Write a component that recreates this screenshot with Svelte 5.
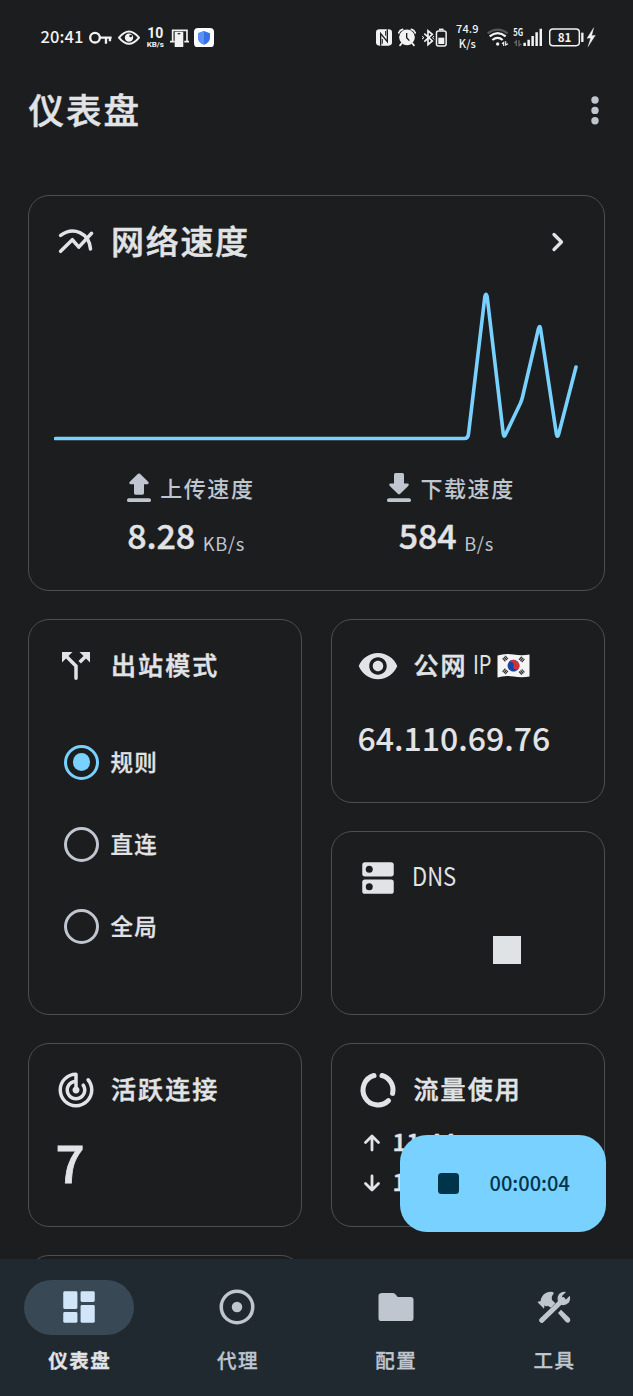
<script>
  const paths = {
    split: 'M14 4l2.29 2.29-2.88 2.88 1.42 1.42 2.88-2.88L20 10V4zM10 4H4v6l2.29-2.29 4.71 4.7V19q0 1 1 1t1-1v-7.41l-5.29-5.3z',
    eye: 'M12 4.5C7 4.5 2.73 7.61 1 12c1.73 4.39 6 7.5 11 7.5s9.27-3.11 11-7.5C21.27 7.61 17 4.5 12 4.5zM12 17c-2.76 0-5-2.24-5-5s2.24-5 5-5 5 2.24 5 5-2.24 5-5 5zm0-8c-1.66 0-3 1.34-3 3s1.34 3 3 3 3-1.34 3-3-1.34-3-3-3z',
    radar: 'M19.8 5.6a1 1 0 0 0-1.7 1.2A8 8 0 0 1 20 12c0 4.42-3.58 8-8 8s-8-3.58-8-8c0-4.08 3.05-7.44 7-7.93v2.02C8.16 6.57 6 9.03 6 12c0 3.31 2.69 6 6 6s6-2.69 6-6c0-1.3-.4-2.4-1-3.3a1 1 0 0 0-1.7 1.2c.45.7.7 1.3.7 2.1 0 2.21-1.79 4-4 4s-4-1.79-4-4c0-1.86 1.28-3.41 3-3.86v2.14c-.6.35-1 .98-1 1.72 0 1.1.9 2 2 2s2-.9 2-2c0-.74-.4-1.38-1-1.72V3q0-1-1-1C6.48 2 2 6.48 2 12s4.48 10 10 10 10-4.48 10-10c0-2.4-.8-4.6-2.2-6.4z'
  };
  const modes = ['规则', '直连', '全局'];
  let mode = $state('规则');
  const tabs = [
    { id: 'dash', label: '仪表盘' },
    { id: 'proxy', label: '代理' },
    { id: 'profile', label: '配置' },
    { id: 'tools', label: '工具' }
  ];
  let tab = $state('dash');
</script>

{#snippet icon(name)}
  <svg class="icon" viewBox="0 0 24 24"><path d={paths[name]} fill="currentColor" fill-rule="evenodd" /></svg>
{/snippet}

<div class="screen">
  <div class="status">
    <span class="time">20:41</span>
    <svg class="key" viewBox="268 80 70 62" width="23.3" height="20.7" fill="none" stroke="#f2f2f2" stroke-width="7">
      <circle cx="286" cy="112" r="14.5" /><path d="M301 112h35M319 112v18M331 112v11" />
    </svg>
    <svg class="look" viewBox="355 80 66 62" width="22" height="20.7">
      <path d="M358 112Q388 75 418 112Q388 149 358 112z" fill="none" stroke="#f2f2f2" stroke-width="6" />
      <circle cx="388" cy="112" r="12.5" fill="#f2f2f2" /><circle cx="393" cy="107" r="4" fill="#1c1d1e" />
    </svg>
    <span class="rate"><b>10</b><small>KB/s</small></span>
    <svg class="car" viewBox="510 80 58 62" width="19.3" height="20.7">
      <path d="M518 123V90h43v33M510 124h14M553 124h15" fill="none" stroke="#f2f2f2" stroke-width="5" />
      <rect x="524" y="94" width="26" height="47" rx="3" fill="#f2f2f2" /><path d="M533 100h8" stroke="#333" stroke-width="4" />
    </svg>
    <svg class="shield" viewBox="582 80 60 62" width="20" height="20.7">
      <rect x="582" y="83" width="60" height="58" rx="12" fill="#fff" />
      <path d="M612 92l18 7v14q0 13-18 20q-18-7-18-20V99z" fill="#3572e8" /><path d="M612 92v41q-18-7-18-20V99z" fill="#5b92f3" />
    </svg>
    <span class="fill"></span>
    <svg class="nfc" viewBox="168 80 48 62" width="16" height="20.7">
      <rect x="168" y="87" width="48" height="49" rx="10" fill="#f2f2f2" />
      <path d="M182 136V100l20 24V87" fill="none" stroke="#1c1d1e" stroke-width="4" /><path d="M187 116v14M197 92v14" stroke="#1c1d1e" stroke-width="3" />
    </svg>
    <svg class="alarm" viewBox="236 80 54 62" width="18" height="20.7">
      <circle cx="263" cy="111" r="23.5" fill="#f2f2f2" />
      <path d="M238 98q3-9 12-11M288 98q-3-9-12-11M247 129l-5 6M279 129l5 6" fill="none" stroke="#f2f2f2" stroke-width="5" stroke-linecap="round" />
      <path d="M262 98v14l8 9" fill="none" stroke="#1c1d1e" stroke-width="4" />
    </svg>
    <svg class="bt" viewBox="307 80 76 62" width="25.3" height="20.7" fill="none" stroke="#f2f2f2">
      <path d="M314 100l24 22-13 11V91l13 11-24 22" stroke-width="5" /><path d="M307 108l6 4-6 4M343 107l-4 5 4 5" stroke-width="3" />
      <rect x="350.5" y="92" width="29" height="45" rx="6" stroke-width="4.500" /><path d="M358 87h14" stroke-width="4.5" />
      <rect x="356" y="112" width="18" height="19" fill="#f2f2f2" stroke="none" />
    </svg>
    <span class="speed"><span>74.9</span><span>K/s</span></span>
    <svg class="wifi" viewBox="500 80 65 62" width="21.7" height="20.7" fill="none" stroke="#f2f2f2" stroke-width="6.500">
      <path d="M502 99q30-22 60 0" stroke="#55585a" /><path d="M508 108q24-20 48 0M516 119q16-13 31 0" />
      <circle cx="532" cy="131" r="5" fill="#f2f2f2" stroke="none" /><path d="M545 130l5-4v11M556 123v11l7-4" stroke-width="3.5" />
    </svg>
    <svg class="signal" viewBox="575 74 91 74" width="30.3" height="24.7">
      <text x="579" y="107" textLength="30" lengthAdjust="spacingAndGlyphs" class="five">5G</text>
      <path d="M582 128l6-6v15M596 120v16l7-6" fill="none" stroke="#66696b" stroke-width="4" />
      <path d="M613 127v10M625 118v19M637 107v30M649 96v41M661.500 85v52" stroke="#f2f2f2" stroke-width="7.500" />
    </svg>
    <svg class="battery" viewBox="685 80 140 62" width="46.7" height="20.7">
      <rect x="687" y="86" width="89" height="50" rx="10" fill="none" stroke="#f2f2f2" stroke-width="4.500" />
      <text x="711" y="124" textLength="41" lengthAdjust="spacingAndGlyphs" class="pct">81</text>
      <path d="M785 97v28" stroke="#f2f2f2" stroke-width="7" /><path d="M819 82l-20 32 11-1-8 26 22-34-11 1z" fill="#f2f2f2" stroke="#f2f2f2" />
    </svg>
  </div>

  <header class="appbar">
    <h1>仪表盘</h1>
    <svg viewBox="0 0 8 30" width="8" height="30" fill="#bfc6cf"><circle cx="4" cy="5" r="3.700" /><circle cx="4" cy="15.400" r="3.700" /><circle cx="4" cy="25.800" r="3.700" /></svg>
  </header>

  <main>
    <section class="card wide">
      <div class="head">
        <svg class="icon" viewBox="0 0 24 24" fill="none" stroke="currentColor" stroke-width="2" stroke-linecap="round" stroke-linejoin="round">
          <path d="M3.200 8.200C10.500 2.800 19.500 6.800 20.300 16" /><path d="M3.200 17.300L9.900 10.700L13.600 14.900L20.900 7" />
        </svg>
        <h2 class="big">网络速度</h2>
        <svg class="chev" viewBox="0 0 14 20" width="14" height="20" fill="none" stroke="#e1e3e6" stroke-width="3.300" stroke-linecap="round" stroke-linejoin="round"><path d="M3 2.500l7.500 7.500L3 17.500" /></svg>
      </div>
      <svg class="chart" viewBox="54.500 285 526 165" width="526" height="165" fill="none" stroke="#78d1ff" stroke-width="3.600" stroke-linecap="round" stroke-linejoin="round">
        <path d="M56 438.500H465Q468.500 438.500 469 434L485.300 297Q486.500 291.500 487.700 297L503.800 434Q504.500 438 506 434.500L521 403Q522.300 400 523 397L539 328.500Q540.200 324.500 541 328.500L556.900 434Q558 438.500 559.200 434L576.500 367" />
      </svg>
      <div class="stats">
        <div class="stat">
          <div class="cap">
            <svg viewBox="0 0 24 30" width="24" height="30" fill="currentColor"><path d="M11 .8q1-.8 2 0l8.200 8q1.400 2-.7 2.400H17V20q0 1.700-1.500 1.700h-7Q7 21.700 7 20v-8.800H3.500q-2.200-.4-.7-2.400z" /><rect y="25.300" width="24" height="3.800" rx="1.900" /></svg>
            <span>上传速度</span>
          </div>
          <div class="val"><b>8.28</b><small>KB/s</small></div>
        </div>
        <div class="stat">
          <div class="cap">
            <svg viewBox="0 0 24 30" width="24" height="30" fill="currentColor"><path d="M8.500 0h7Q17 0 17 1.700v8.800h3.500q2.200.4.700 2.400l-8.200 8q-1 .8-2 0l-8.200-8q-1.400-2 .7-2.400H7V1.700Q7 0 8.500 0z" /><rect y="25.300" width="24" height="3.800" rx="1.900" /></svg>
            <span>下载速度</span>
          </div>
          <div class="val"><b>584</b><small>B/s</small></div>
        </div>
      </div>
    </section>

    <div class="cols">
      <div class="col">
        <section class="card tall">
          <div class="head">{@render icon('split')}<h2>出站模式</h2></div>
          <div class="modes">
            {#each modes as m}
              <button class="mode" class:on={mode === m} onclick={() => (mode = m)}><i></i><span>{m}</span></button>
            {/each}
          </div>
        </section>
        <section class="card small">
          <div class="head">{@render icon('radar')}<h2>活跃连接</h2></div>
          <div class="count">7</div>
        </section>
        <section class="card small"></section>
      </div>
      <div class="col right">
        <section class="card small">
          <div class="head">
            {@render icon('eye')}
            <h2>公网</h2><span class="latin ip">IP</span>
            <svg class="flag" viewBox="0 0 33 26" width="33" height="26">
              <path d="M.5 2.500Q8 0 16.500 1.500T32.500 1.500V23.500Q25 25 16.500 23.500T.5 24.500z" fill="#f5f5f5" />
              <g transform="translate(16.500 12.700) rotate(20)">
                <circle r="5.900" fill="#1546a0" /><path d="M-5.900 0a5.900 5.900 0 0 1 11.800 0a2.950 2.950 0 0 1-5.900 0a2.950 2.950 0 0 0-5.900 0z" fill="#d0313f" />
              </g>
              <g stroke="#303030" stroke-width="4.200" stroke-dasharray="1.300 .5"><path d="M6.500 7.200l3.500-3M23 20.500l3.500-3M23 4.800l3.500 3.200M6.500 16.800l3.500 3" /></g>
            </svg>
          </div>
          <div class="addr">64.110.69.76</div>
        </section>
        <section class="card small">
          <div class="head">
            <svg class="icon" viewBox="0 0 24 24" fill="currentColor"><rect x="3" y="3" width="18" height="8.100" rx="1.500" /><rect x="3" y="12.900" width="18" height="8.100" rx="1.500" /><g fill="#1c1d1e"><circle cx="7" cy="7" r="2" /><circle cx="7" cy="17" r="2" /></g></svg>
            <span class="latin">DNS</span>
          </div>
          <div class="block"></div>
        </section>
        <section class="card small">
          <div class="head">
            <svg class="icon" viewBox="0 0 24 24" fill="none" stroke="currentColor" stroke-width="2.900" stroke-linecap="round"><path d="M14.300 3.750A8.560 8.560 0 0 1 20.350 13.900M18 18.100A8.560 8.560 0 1 1 9.700 3.750" /></svg>
            <h2>流量使用</h2>
          </div>
          <div class="traffic">
            <div><svg viewBox="0 0 18 18" width="18" height="18"><path d="M9 16V3M2.500 8.500L9 2l6.500 6.500" /></svg><span>11.44</span></div>
            <div><svg viewBox="0 0 18 18" width="18" height="18"><path d="M9 2v13M2.500 9.500L9 16l6.500-6.500" /></svg><span>1</span></div>
          </div>
        </section>
      </div>
    </div>
  </main>

  <button class="fab"><i></i><span>00:00:04</span></button>

  <nav>
    {#each tabs as t}
      <button class="tab" class:active={tab === t.id} onclick={() => (tab = t.id)}>
        <span class="pill">
          {#if t.id === 'dash'}
            <svg class="icon" viewBox="0 0 24 24" fill="currentColor"><rect x="3" y="3" width="8.100" height="10.100" rx=".8" /><rect x="3" y="14.900" width="8.100" height="6.100" rx=".8" /><rect x="12.900" y="3" width="8.100" height="6.100" rx=".8" /><rect x="12.900" y="10.900" width="8.100" height="10.100" rx=".8" /></svg>
          {:else if t.id === 'proxy'}
            <svg class="icon" viewBox="0 0 24 24" fill="none" stroke="currentColor" stroke-width="2"><circle cx="12" cy="12" r="9" /><circle cx="12" cy="12" r="3" fill="currentColor" stroke="none" /></svg>
          {:else if t.id === 'profile'}
            <svg class="icon" viewBox="0 0 24 24" fill="currentColor"><path d="M10 4H4c-1.100 0-1.990.5-1.990 1.600L2 18.400c0 1.100.5 1.600 1.600 1.600h16.800c1.100 0 1.600-.5 1.600-1.600V7.900c0-1.100-.5-1.600-1.600-1.600h-7.400L11.500 4.600Q11 4 10 4z" /></svg>
          {:else}
            <svg viewBox="672 136 102 98" width="34" height="32.700" fill="currentColor">
              <path d="M673 169L683 166Q684 152 697 143Q706 136 719 139Q725 141 719 148Q713 155 717 163L727 173L714 186L704 180Q698 184 695 178L693 189z" />
              <path d="M686 224L750 162" fill="none" stroke="currentColor" stroke-width="15" stroke-linecap="round" />
              <path d="M759 139Q748 136 739 144Q730 155 736 168L746 178Q758 180 767 171Q774 161 770 150L760 161Q752 164 748 156L747 151z" />
              <path d="M744 192L735 202L758 228Q765 234 770 228Q774 222 769 216z" />
            </svg>
          {/if}
        </span>
        <span class="name">{t.label}</span>
      </button>
    {/each}
  </nav>
</div>

<style>
  :global(body) { background: #1c1d1e; }
  * { box-sizing: border-box; }
  svg { display: block; flex: none; }
  button { border: 0; background: none; padding: 0; margin: 0; font: inherit; color: inherit; letter-spacing: inherit; }
  h1, h2 { margin: 0; font-weight: 500; white-space: nowrap; -webkit-text-stroke: .5px currentColor; stroke-linejoin: round; }
  .screen { position: relative; width: 633px; height: 1396px; overflow: hidden; display: flex; flex-direction: column; background: #1c1d1e; color: #e1e3e6; font-family: "Noto Sans CJK SC", sans-serif; font-weight: 500; }
  .status { height: 74px; flex: none; display: flex; align-items: center; padding: 0 37.500px 0 40.500px; color: #f2f2f2; }
  .time { width: 48.800px; font-size: 16.500px; line-height: 20px; letter-spacing: .1px; margin-top: -2px; }
  .look { margin-left: 5.700px; }
  .rate { width: 18px; margin-left: 6px; display: flex; flex-direction: column; align-items: center; font-family: Roboto, sans-serif; }
  .rate b { font-size: 14px; line-height: 17px; font-weight: 700; margin-top: 0; }
  .rate small { font-size: 8px; line-height: 9px; font-weight: 700; margin-top: -2px; }
  .car { margin-left: 5.500px; }
  .shield { margin-left: 4.700px; }
  .fill { flex: 1; }
  .alarm { margin-left: 6.700px; }
  .bt { margin-left: 5.700px; }
  .speed { width: 23px; margin: 0 8px 0 8.500px; display: flex; flex-direction: column; align-items: center; font-size: 11px; line-height: 15px; letter-spacing: .1px; margin-top: -2px; }
  .signal { margin-left: 3.300px; }
  .battery { margin-left: 6.700px; }
  .five { font-size: 30px; font-weight: 700; fill: #f2f2f2; }
  .pct { font-size: 36px; font-weight: 700; fill: #f2f2f2; }
  .appbar { height: 72px; flex: none; display: flex; align-items: center; justify-content: space-between; padding: 0 34px 0 28.500px; }
  h1 { font-size: 35.500px; line-height: 48px; letter-spacing: 2px; margin-top: -2px; }
  main { flex: 1; min-height: 0; overflow: hidden; display: flex; flex-direction: column; gap: 27.500px; padding: 48.500px 28px 0 27.500px; }
  .card { flex: none; border: 1px solid #4a4f51; border-radius: 21px; padding: 25.500px 26px 0; }
  .wide { height: 396.500px; }
  .tall { height: 396.500px; }
  .small { height: 184.500px; }
  .cols { display: flex; gap: 28.500px; flex: none; }
  .col { flex: 1; min-width: 0; display: flex; flex-direction: column; gap: 27.500px; }
  .right .card { padding-left: 25.500px; }
  .head { display: flex; align-items: center; height: 42px; }
  .icon { width: 42px; height: 42px; }
  h2 { font-size: 25px; line-height: 36px; letter-spacing: 2.100px; margin: -5px 0 0 14.500px; }
  .big { font-size: 33px; line-height: 42px; letter-spacing: 1.700px; }
  .chev { margin-left: auto; margin-right: 13px; }
  .chart { margin: 22px 0 0 -.5px; }
  .stats { display: flex; padding: 20px 0 0 6px; margin-right: -3px; }
  .stat { flex: 1; display: flex; flex-direction: column; align-items: center; }
  .cap { height: 34px; display: flex; align-items: center; gap: 9.500px; color: #bfc6cf; font-size: 22px; line-height: 30px; letter-spacing: 1.600px; }
  .cap svg { margin-top: 2px; }
  .cap span { margin-top: -1px; }
  .val { height: 44px; margin: 9px 9px 0 0; display: flex; align-items: baseline; line-height: 44px; }
  .val b { font-size: 34px; font-weight: 500; letter-spacing: -.100px; -webkit-text-stroke: .4px currentColor; }
  .val small { font-size: 18.300px; font-weight: 400; color: #bfc6cf; letter-spacing: .700px; margin-left: 7.500px; position: relative; top: 2px; }
  .modes { display: flex; flex-direction: column; gap: 42px; margin: 55px 0 0 9.500px; }
  .mode { display: flex; align-items: center; height: 40px; gap: 11.500px; font-size: 22.500px; line-height: 30px; letter-spacing: 1.300px; -webkit-text-stroke: .3px currentColor; }
  .mode i { width: 35px; height: 35px; border: 3.500px solid #bfc6cf; border-radius: 50%; display: flex; align-items: center; justify-content: center; }
  .mode.on i { border-color: #78d1ff; }
  .mode.on i::after { content: ""; width: 17.500px; height: 17.500px; border-radius: 50%; background: #78d1ff; }
  .mode span { margin-top: -3px; }
  .count { font-size: 51px; line-height: 60px; margin-top: 20px; padding-left: 1px; -webkit-text-stroke: .8px currentColor; }
  .latin { font-size: 25px; line-height: 36px; font-weight: 400; margin: -6px 0 0 13px; transform: scaleX(.88); transform-origin: left; }
  .latin.ip { margin-left: 5.500px; transform: scaleX(.8); }
  .flag { margin-left: 1px; }
  .addr { font-size: 32px; line-height: 44px; margin-top: 28px; padding-left: .5px; }
  .block { width: 28px; height: 28px; background: #dfe3e6; margin: 37px 0 0 136px; }
  .traffic { margin: 12px 0 0 5.500px; }
  .traffic div { height: 40px; display: flex; align-items: center; gap: 12px; font-size: 24px; line-height: 30px; }
  .traffic span { margin-top: -5px; -webkit-text-stroke: .5px currentColor; letter-spacing: .3px; }
  .traffic svg { fill: none; stroke: currentColor; stroke-width: 2.800; stroke-linecap: round; stroke-linejoin: round; }
  .fab { position: absolute; left: 400px; top: 1135px; width: 206px; height: 96.500px; border-radius: 27px; background: #78d1ff; color: #00344a; display: flex; align-items: center; padding-left: 37.500px; font-size: 20px; line-height: 26px; letter-spacing: 0; }
  .fab i { width: 21px; height: 21px; border-radius: 3.500px; background: currentColor; margin-right: 31px; }
  .fab span { margin-top: -1px; }
  nav { height: 137px; flex: none; display: grid; grid-template-columns: repeat(4, 1fr); background: #212930; position: relative; }
  .tab { display: flex; flex-direction: column; align-items: center; padding-top: 20.500px; color: #bfc6cf; }
  .pill { width: 110px; height: 55px; border-radius: 28px; display: flex; align-items: center; justify-content: center; }
  .active .pill { background: #384854; color: #d0e6f8; }
  .name { margin-top: 10.500px; font-size: 19.500px; line-height: 30px; letter-spacing: 1.500px; padding-left: 1.500px; -webkit-text-stroke: .3px currentColor; }
  .active .name { font-weight: 700; color: #e1e3e6; }
</style>
